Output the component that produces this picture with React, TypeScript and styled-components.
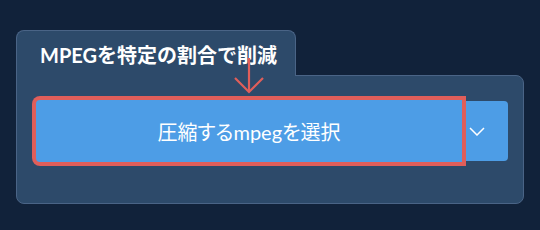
import styled, { createGlobalStyle } from "styled-components";

const GlobalStyle = createGlobalStyle`
  html, body {
    margin: 0;
    padding: 0;
    background: #11223a;
  }
  body {
    font-family: Lato, "Noto Sans CJK JP", sans-serif;
  }
`;

export default function App() {
  return (
    <>
      <GlobalStyle />
      <Page>
        <Tab>
          <Title>MPEGを特定の割合で削減</Title>
        </Tab>
        <Panel>
          <ButtonGroup>
            <MainButton type="button">圧縮するmpegを選択</MainButton>
            <DropButton type="button" aria-label="その他">
              <svg width="16" height="9" viewBox="0 0 16 9">
                <polyline
                  points="1,1 8,8 15,1"
                  fill="none"
                  stroke="#ffffff"
                  strokeWidth="1.5"
                />
              </svg>
            </DropButton>
          </ButtonGroup>
          <Pointer width="30" height="36" viewBox="0 0 30 36">
            <line x1="15" y1="0" x2="15" y2="34" stroke="#e05e5a" strokeWidth="2.2" />
            <polyline
              points="1,20 15,34 29,20"
              fill="none"
              stroke="#e05e5a"
              strokeWidth="2.2"
            />
          </Pointer>
        </Panel>
      </Page>
    </>
  );
}

const Page = styled.div`
  padding: 30px 16px 0 16px;
  width: 508px;
`;

const Tab = styled.div`
  position: relative;
  z-index: 1;
  width: 280px;
  height: 46px;
  margin-bottom: -1px;
  background: #2d4a6a;
  border: 1px solid #4a6486;
  border-bottom: none;
  border-radius: 8px 8px 0 0;
  box-sizing: border-box;
  padding: 11px 0 0 23px;
`;

const Title = styled.h1`
  margin: 0;
  font-size: 20px;
  line-height: 26px;
  font-weight: 700;
  color: #ffffff;
  white-space: nowrap;
`;

const Panel = styled.div`
  position: relative;
  background: #2d4a6a;
  border: 1px solid #4a6486;
  border-radius: 0 8px 8px 8px;
  padding: 24px 15px 41px 19px;
`;

const ButtonGroup = styled.div`
  display: flex;
  height: 62px;
`;

const MainButton = styled.button`
  flex: 1;
  border: none;
  margin: 0;
  background: #4d9de6;
  color: #ffffff;
  font-family: Lato, "Noto Sans CJK JP", sans-serif;
  font-size: 20px;
  font-feature-settings: "palt";
  border-radius: 4px 0 0 4px;
  box-shadow: 0 0 0 4px #e05e5a;
  position: relative;
  z-index: 1;
  cursor: pointer;
`;

const DropButton = styled.button`
  width: 46px;
  margin: 1px 0;
  border: none;
  background: #4d9de6;
  border-radius: 0 4px 4px 0;
  display: flex;
  align-items: center;
  justify-content: flex-start;
  padding: 0 0 0 7px;
  cursor: pointer;
`;

const Pointer = styled.svg`
  position: absolute;
  left: 217px;
  top: -18px;
  z-index: 2;
`;
